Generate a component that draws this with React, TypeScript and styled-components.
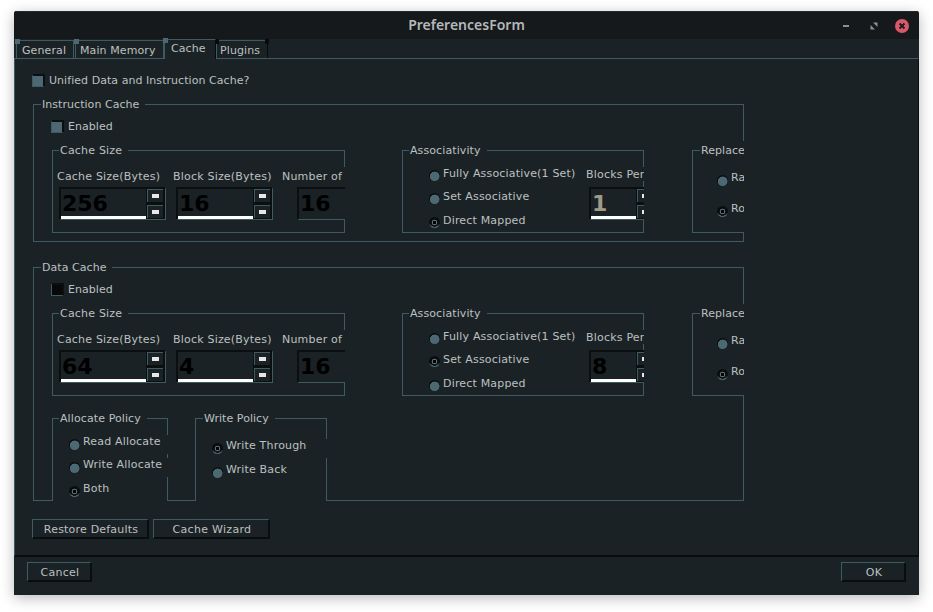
import React from "react";
import styled, { createGlobalStyle } from "styled-components";

const LINE = "#3f5b62";
const PANE = "#1b2225";
const TEXT = "#bcc0c0";
const FILL = "#4c6872";
const DARK = "#0b0f10";

const Global = createGlobalStyle`
  html, body { margin: 0; padding: 0; background: #fff; }
  body { font-family: "DejaVu Sans", sans-serif; font-size: 11px; color: ${TEXT}; }
`;

const Page = styled.div`
  width: 933px;
  height: 612px;
  padding: 11px 14px 0;
  box-sizing: border-box;
  overflow: hidden;
`;

const Window = styled.div`
  width: 905px;
  height: 584px;
  display: flex;
  flex-direction: column;
  background: ${PANE};
  border-radius: 3px 3px 0 0;
  box-shadow: 0 3px 14px rgba(0, 0, 0, 0.28);
  overflow: hidden;
`;

const TitleBar = styled.div`
  height: 28px;
  flex: none;
  display: flex;
  align-items: center;
  background: #15191b;
  border-top: 1px solid #23282a;
  box-sizing: border-box;
`;

const Title = styled.div`
  flex: 1;
  padding: 0 0 2px 90px;
  text-align: center;
  font-family: "Noto Sans", sans-serif;
  font-size: 14px;
  font-weight: 600;
  color: #b4b8b9;
`;

const WindowButtons = styled.div`
  width: 90px;
  display: flex;
  align-items: center;
  justify-content: flex-end;
  gap: 17px;
  padding-right: 10px;
  box-sizing: border-box;
`;

const MinimizeIcon = styled.svg`
  margin-right: 3px;
`;

const TabBar = styled.div`
  height: 19px;
  flex: none;
  display: flex;
  align-items: flex-end;
  padding-left: 2px;
  background: ${PANE};
`;

const Tab = styled.div<{ $active?: boolean; $left: number; $gap: number; $width: number; $marker: string; $endMark?: boolean }>`
  position: relative;
  z-index: ${(p) => (p.$active ? 2 : 1)};
  width: ${(p) => p.$width}px;
  height: ${(p) => (p.$active ? 20 : 18)}px;
  margin-left: ${(p) => p.$gap}px;
  margin-bottom: ${(p) => (p.$active ? -1 : 0)}px;
  box-sizing: border-box;
  padding: ${(p) => (p.$active ? "1px" : "2px")} 0 0 ${(p) => p.$left}px;
  line-height: 16px;
  letter-spacing: 0.1px;
  white-space: nowrap;
  border-top: 1px solid ${LINE};
  border-left: 1px solid ${LINE};
  border-right: 1px solid ${(p) => (p.$endMark || p.$active ? "#080a0b" : LINE)};
  background: ${PANE};
  &::before {
    content: "";
    position: absolute;
    left: ${(p) => (p.$endMark ? -3 : -2)}px;
    top: -2px;
    width: 5px;
    height: 5px;
    background: ${(p) => p.$marker};
  }
  &::after {
    content: "";
    display: ${(p) => (p.$endMark ? "block" : "none")};
    position: absolute;
    right: -2px;
    top: -2px;
    width: 4px;
    height: 5px;
    background: #080a0b;
  }
`;

const Pane = styled.div`
  flex: 1;
  min-height: 0;
  box-sizing: border-box;
  border-top: 1px solid ${LINE};
  border-left: 1px solid ${LINE};
  border-right: 1px solid #0a0d0e;
  border-bottom: 2px solid #0a0d0e;
  padding: 14px 0 0 18px;
`;

const CheckRow = styled.div`
  display: flex;
  align-items: flex-start;
  height: 14px;
  margin-left: -1px;
  letter-spacing: 0.05px;
  line-height: 16px;
`;

const CheckBox = styled.span<{ $checked?: boolean }>`
  width: 13px;
  height: 13px;
  flex: none;
  margin: 1px 4px 0 0;
  box-sizing: border-box;
  background: ${(p) => (p.$checked ? "#070909" : FILL)};
  border-top: 2px solid ${DARK};
  border-right: 2px solid ${DARK};
  border-left: 1px solid ${LINE};
  border-bottom: 1px solid ${LINE};
`;

const Group = styled.div<{ $w: number; $h: number; $open?: boolean; $bg?: boolean }>`
  position: relative;
  width: ${(p) => p.$w}px;
  height: ${(p) => p.$h}px;
  flex: none;
  box-sizing: border-box;
  border: 1px solid ${LINE};
  ${(p) => (p.$open ? "border-bottom: none;" : "")}
  ${(p) => (p.$bg ? `background: ${PANE};` : "")}
`;

const Legend = styled.span<{ $left?: number; $ls?: number }>`
  position: absolute;
  left: ${(p) => p.$left ?? 6}px;
  top: -8px;
  padding: 0 6px 0 1px;
  height: 14px;
  line-height: 16px;
  letter-spacing: ${(p) => p.$ls ?? 0.05}px;
  background: ${PANE};
  white-space: nowrap;
`;

const OuterGroup = styled(Group)<{ $mt: number }>`
  margin-top: ${(p) => p.$mt}px;
  padding: 14px 0 0 18px;
`;

const GroupRow = styled.div`
  display: flex;
  align-items: flex-start;
  margin-top: 17px;
`;

const Fields = styled.div`
  display: flex;
  padding: 16px 0 0 3px;
`;

const FieldColumn = styled.div<{ $w: number; $solid?: boolean; $clip?: boolean }>`
  width: ${(p) => p.$w}px;
  flex: none;
  display: flex;
  flex-direction: column;
  ${(p) => (p.$clip ? "overflow: hidden; margin-right: -1px;" : "")}
  ${(p) => (p.$solid ? `background: ${PANE};` : "")}
`;

const FieldLabel = styled.div<{ $left?: number; $top?: number; $bg?: boolean }>`
  height: 14px;
  flex: none;
  line-height: 16px;
  margin-left: ${(p) => p.$left || 0}px;
  margin-top: ${(p) => p.$top || 0}px;
  letter-spacing: 0.2px;
  white-space: nowrap;
  ${(p) => (p.$bg ? `background: ${PANE};` : "")}
`;

const Spin = styled.div<{ $w: number; $left: number; $top: number }>`
  width: ${(p) => p.$w}px;
  height: 33px;
  margin-left: ${(p) => p.$left}px;
  margin-top: ${(p) => p.$top}px;
  flex: none;
  box-sizing: border-box;
  display: flex;
  border-top: 2px solid ${DARK};
  border-left: 2px solid ${DARK};
  border-right: 1px solid ${LINE};
  border-bottom: 1px solid ${LINE};
  background: ${PANE};
`;

const SpinField = styled.div`
  flex: 1;
  min-width: 0;
  display: flex;
  flex-direction: column;
  overflow: hidden;
`;

const SpinValue = styled.div<{ $tan?: boolean }>`
  height: 27px;
  flex: none;
  line-height: 30px;
  padding-left: 1px;
  font-size: 22px;
  font-weight: 700;
  color: ${(p) => (p.$tan ? "#a09a88" : "#000")};
`;

const SpinBar = styled.div`
  height: 3px;
  flex: none;
  background: #fff;
`;

const SpinButtons = styled.div`
  width: 19px;
  flex: none;
  display: flex;
  flex-direction: column;
  gap: 3px;
  padding: 0 2px 1px 1px;
  box-sizing: border-box;
  background: ${DARK};
`;

const SpinButton = styled.div`
  flex: 1;
  display: flex;
  align-items: center;
  justify-content: center;
  background: ${PANE};
  border-top: 1px solid ${LINE};
  border-left: 1px solid ${LINE};
  &::after {
    content: "";
    width: 7px;
    height: 4px;
    background: #e6e8e8;
  }
`;

const PlainBox = styled.div`
  height: 33px;
  flex: none;
  margin: 4px 0 0 16px;
  box-sizing: border-box;
  border-top: 2px solid ${DARK};
  border-left: 2px solid ${DARK};
  border-bottom: 1px solid ${LINE};
  background: ${PANE};
`;

const RadioList = styled.div<{ $step: number; $top: number; $left: number; $w: number; $dot?: number }>`
  width: ${(p) => p.$w}px;
  flex: none;
  display: flex;
  flex-direction: column;
  gap: ${(p) => p.$step - 14}px;
  margin-top: ${(p) => p.$top}px;
  padding-left: ${(p) => p.$left}px;
  box-sizing: border-box;
  --radio-drop: ${(p) => p.$dot ?? 4}px;
`;

const RadioRow = styled.div`
  height: 14px;
  display: flex;
  align-items: flex-start;
  line-height: 14px;
  letter-spacing: 0.18px;
  white-space: nowrap;
`;

const Radio = styled.span<{ $checked?: boolean }>`
  width: 11px;
  height: 11px;
  flex: none;
  margin: var(--radio-drop, 4px) 3px 0 0;
  border-radius: 50%;
  box-sizing: border-box;
  background: ${(p) =>
    p.$checked
      ? `radial-gradient(circle at 50% 50%, #020404 0 1.5px, #5d6f75 2px 2.6px, #0a0d0e 3.1px 4px, transparent 4.5px), linear-gradient(#0a0d0e 0 60%, ${FILL} 88%)`
      : `radial-gradient(circle at 52% 58%, ${FILL} 0 4.6px, #0a0e0f 5.1px)`};
`;

const RowCover = styled.div<{ $h: number; $w: number; $top: number; $pl: number }>`
  height: ${(p) => p.$h}px;
  width: ${(p) => p.$w}px;
  margin-top: ${(p) => p.$top}px;
  padding-left: ${(p) => p.$pl}px;
  box-sizing: border-box;
  display: flex;
  align-items: flex-start;
  background: ${PANE};
`;

const ReplaceWrap = styled.div`
  width: 52px;
  flex: none;
  margin-top: -9px;
  padding-top: 9px;
  height: 92px;
  box-sizing: border-box;
  overflow: hidden;
  background: ${PANE};
`;

const ReplaceBox = styled.div`
  position: relative;
  height: 83px;
  box-sizing: border-box;
  border: 1px solid ${LINE};
  border-right: none;
`;

const ReplaceLegend = styled(Legend)`
  padding-right: 0;
`;

const PolicyRow = styled.div`
  display: flex;
  align-items: flex-start;
  margin-top: 22px;
`;

const ActionRow = styled.div`
  display: flex;
  gap: 4px;
  margin: 18px 0 0 -1px;
`;

const Button = styled.button<{ $w: number; $ls: number }>`
  width: ${(p) => p.$w}px;
  height: 20px;
  padding: 2px 0 0 2px;
  box-sizing: border-box;
  font: inherit;
  line-height: 16px;
  letter-spacing: ${(p) => p.$ls}px;
  color: ${TEXT};
  background: ${PANE};
  border-style: solid;
  border-width: 1px 2px 2px 1px;
  border-color: ${LINE} #0a0d0e #0a0d0e ${LINE};
`;

const Footer = styled.div`
  height: 38px;
  flex: none;
  display: flex;
  justify-content: space-between;
  padding: 5px 13px 0;
  box-sizing: border-box;
`;

const Spacer = styled.div<{ $w: number }>`
  width: ${(p) => p.$w}px;
  flex: none;
`;

const PolicyBody = styled.div`
  padding-top: 16px;
`;

function Minimize() {
  return (
    <MinimizeIcon width="8" height="4" viewBox="0 0 8 4" aria-hidden>
      <rect x="1" y="1" width="6" height="2" fill="#8b8f90" />
    </MinimizeIcon>
  );
}
function Restore() {
  return (
    <svg width="8" height="8" viewBox="0 0 8 8" aria-hidden>
      <path d="M3 0.5h4.5v4.5zM0.5 3l4.5 4.5h-4.5z" fill="#8b8f90" />
    </svg>
  );
}
function Close() {
  return (
    <svg width="14" height="14" viewBox="0 0 14 14" aria-hidden>
      <circle cx="7" cy="7" r="7" fill="#d9596a" />
      <path d="M4.5 4.5l5 5M9.5 4.5l-5 5" stroke="#1a1c1e" strokeWidth="1.8" />
    </svg>
  );
}

function SpinBox({ value, w, left, tan, top }: { value: string; w: number; left: number; tan?: boolean; top: number }) {
  return (
    <Spin $w={w} $left={left} $top={top}>
      <SpinField>
        <SpinValue $tan={tan}>{value}</SpinValue>
        <SpinBar />
      </SpinField>
      <SpinButtons>
        <SpinButton />
        <SpinButton />
      </SpinButtons>
    </Spin>
  );
}

function CacheSize({ size, block }: { size: string; block: string }) {
  return (
    <Group $w={293} $h={83}>
      <Legend $ls={0.2}>Cache Size</Legend>
      <Fields>
        <FieldColumn $w={116}>
          <FieldLabel $left={1} $top={2}>Cache Size(Bytes)</FieldLabel>
          <SpinBox value={size} w={107} left={3} top={4} />
        </FieldColumn>
        <FieldColumn $w={109}>
          <FieldLabel $left={1} $top={2}>Block Size(Bytes)</FieldLabel>
          <SpinBox value={block} w={97} left={4} top={4} />
        </FieldColumn>
        <FieldColumn $w={64} $clip $solid>
          <FieldLabel $left={1} $top={2}>Number of Sets</FieldLabel>
          <PlainBox>
            <SpinValue>16</SpinValue>
          </PlainBox>
        </FieldColumn>
      </Fields>
    </Group>
  );
}

function Associativity({ checked, blocks, tan }: { checked: number; blocks: string; tan?: boolean }) {
  return (
    <Group $w={242} $h={83}>
      <Legend $ls={0.1}>Associativity</Legend>
      <Fields>
        <RadioList $w={180} $step={23.5} $top={-0.5} $left={23} $dot={3}>
          <RadioRow><Radio $checked={checked === 0} />Fully Associative(1 Set)</RadioRow>
          <RadioRow><Radio $checked={checked === 1} />Set Associative</RadioRow>
          <RadioRow><Radio $checked={checked === 2} />Direct Mapped</RadioRow>
        </RadioList>
        <FieldColumn $w={58} $clip>
          <FieldLabel $bg>Blocks Per Set</FieldLabel>
          <SpinBox value={blocks} w={67} left={3} tan={tan} top={6} />
        </FieldColumn>
      </Fields>
    </Group>
  );
}

function Replacement({ checked }: { checked: number }) {
  return (
    <ReplaceWrap>
      <ReplaceBox>
        <ReplaceLegend $left={7}>Replacement</ReplaceLegend>
        <RadioList $w={51} $step={31} $top={20} $left={24}>
          <RadioRow><Radio $checked={checked === 0} />Random</RadioRow>
          <RadioRow><Radio $checked={checked === 1} />Round Robin</RadioRow>
        </RadioList>
      </ReplaceBox>
    </ReplaceWrap>
  );
}

function CacheRow({ size, block, checked, blocks, tan, repl }: {
  size: string; block: string; checked: number; blocks: string; tan?: boolean; repl: number;
}) {
  return (
    <GroupRow>
      <CacheSize size={size} block={block} />
      <Spacer $w={57} />
      <Associativity checked={checked} blocks={blocks} tan={tan} />
      <Spacer $w={48} />
      <Replacement checked={repl} />
    </GroupRow>
  );
}

export default function App() {
  return (
    <Page>
      <Global />
      <Window>
        <TitleBar>
          <Title>PreferencesForm</Title>
          <WindowButtons>
            <Minimize />
            <Restore />
            <Close />
          </WindowButtons>
        </TitleBar>
        <TabBar>
          <Tab $gap={0} $width={58} $left={5} $marker={FILL}>General</Tab>
          <Tab $gap={1} $width={89} $left={4} $marker={FILL}>Main Memory</Tab>
          <Tab $gap={0} $width={52} $left={6} $marker={FILL} $active>Cache</Tab>
          <Tab $gap={0} $width={52} $left={3} $marker={"#080a0b"} $endMark>Plugins</Tab>
        </TabBar>
        <Pane>
          <CheckRow>
            <CheckBox />
            Unified Data and Instruction Cache?
          </CheckRow>
          <OuterGroup $w={711} $h={138} $mt={17}>
            <Legend $left={7}>Instruction Cache</Legend>
            <CheckRow>
              <CheckBox />
              Enabled
            </CheckRow>
            <CacheRow size="256" block="16" checked={2} blocks="1" tan repl={1} />
          </OuterGroup>
          <OuterGroup $w={711} $h={234} $mt={25}>
            <Legend $left={7}>Data Cache</Legend>
            <CheckRow>
              <CheckBox $checked />
              Enabled
            </CheckRow>
            <CacheRow size="64" block="4" checked={1} blocks="8" repl={1} />
            <PolicyRow>
              <Group $w={116} $h={83} $open $bg>
                <Legend $ls={0.1}>Allocate Policy</Legend>
                <PolicyBody>
                  <RowCover $w={115} $h={19} $top={0} $pl={16}>
                    <RadioRow><Radio />Read Allocate</RadioRow>
                  </RowCover>
                  <RowCover $w={115} $h={19} $top={4} $pl={16}>
                    <RadioRow><Radio />Write Allocate</RadioRow>
                  </RowCover>
                  <RowCover $w={114} $h={14} $top={5} $pl={16}>
                    <RadioRow><Radio $checked />Both</RadioRow>
                  </RowCover>
                </PolicyBody>
              </Group>
              <Spacer $w={27} />
              <Group $w={132} $h={83} $open $bg>
                <Legend $left={7}>Write Policy</Legend>
                <PolicyBody>
                  <RowCover $w={131} $h={19} $top={4} $pl={16}>
                    <RadioRow><Radio $checked />Write Through</RadioRow>
                  </RowCover>
                  <RowCover $w={130} $h={14} $top={5} $pl={16}>
                    <RadioRow><Radio />Write Back</RadioRow>
                  </RowCover>
                </PolicyBody>
              </Group>
            </PolicyRow>
          </OuterGroup>
          <ActionRow>
            <Button $w={117} $ls={0.2}>Restore Defaults</Button>
            <Button $w={117} $ls={0.3}>Cache Wizard</Button>
          </ActionRow>
        </Pane>
        <Footer>
          <Button $w={65} $ls={0.25}>Cancel</Button>
          <Button $w={65} $ls={0.25}>OK</Button>
        </Footer>
      </Window>
    </Page>
  );
}
